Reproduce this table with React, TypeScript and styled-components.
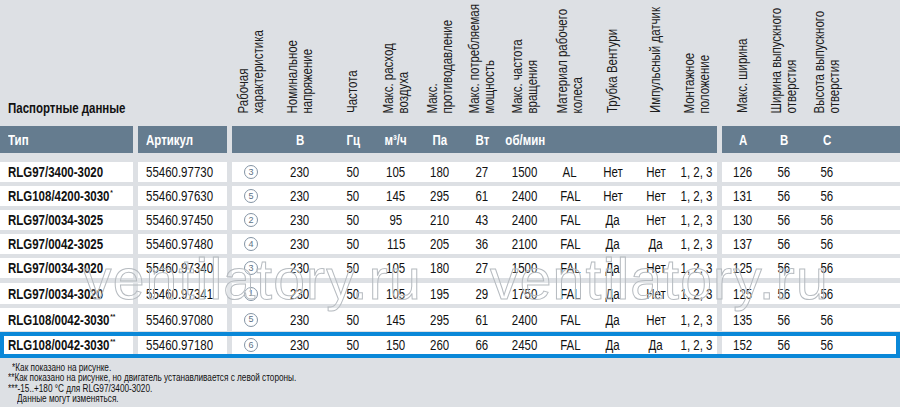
import React from 'react';
import styled, { createGlobalStyle } from 'styled-components';

const SANS = `"Liberation Sans", Arial, sans-serif`;
const K = 0.82;
const LABEL_H = 113;

const Global = createGlobalStyle`
  html, body { margin: 0; padding: 0; background: #dde0e4; }
  body { font-family: ${SANS}; color: #111; }
`;

const G3 = '38px 60px 46px 40px 48px 36px 50px 40px 46px 40px 41px';
const G4 = '42px 40px 46px 50px';

const Page = styled.div`
  position: relative;
  width: 900px;
  height: 407px;
  overflow: hidden;
  background: #dde0e4;
`;

const Band = styled.div<{ $h: number; $mt?: number; $selected?: boolean }>`
  position: relative;
  display: flex;
  gap: 5px;
  height: ${p => p.$h}px;
  margin-top: ${p => p.$mt ?? 0}px;
  padding: ${p => (p.$selected ? '4px 0' : '0')};
  box-sizing: border-box;
  ${p =>
    p.$selected &&
    `
    &::after {
      content: '';
      position: absolute;
      inset: 0;
      border: 4px solid #0a88d8;
      pointer-events: none;
    }
  `}
`;

const Group = styled.div<{ $w: number; $kind: 'none' | 'bar' | 'row'; $cols?: string; $pl?: number }>`
  box-sizing: border-box;
  flex: 0 0 ${p => p.$w}px;
  width: ${p => p.$w}px;
  background: ${p => (p.$kind === 'bar' ? '#657c8f' : p.$kind === 'row' ? '#ffffff' : 'transparent')};
  color: ${p => (p.$kind === 'bar' ? '#ffffff' : '#111111')};
  padding-left: ${p => p.$pl ?? 0}px;
  display: ${p => (p.$cols ? 'grid' : 'flex')};
  grid-template-columns: ${p => p.$cols ?? 'none'};
  align-items: ${p => (p.$kind === 'none' ? 'end' : 'center')};
  font-size: 14px;
  font-weight: ${p => (p.$kind === 'bar' ? 700 : 400)};
  white-space: nowrap;
`;

const Txt = styled.span<{ $left?: boolean; $bold?: boolean }>`
  display: inline-block;
  transform: scaleX(${K});
  transform-origin: ${p => (p.$left ? 'left center' : 'center center')};
  font-weight: ${p => (p.$bold ? 700 : 'inherit')};
  white-space: nowrap;
`;

const Title = styled.div`
  font-size: 14px;
  font-weight: 700;
  color: #111;
  padding: 0 0 10px 8px;
  line-height: 16px;
`;

const LabelCell = styled.div`
  align-self: start;
  height: ${LABEL_H}px;
  display: flex;
  justify-content: center;
  align-items: center;
`;

const Vert = styled.div`
  flex: 0 0 auto;
  width: ${LABEL_H / K}px;
  transform: rotate(-90deg) scaleX(${K});
  font-size: 14px;
  line-height: 15px;
  color: #1c1c1c;
  text-align: left;
  white-space: nowrap;
`;

const Cell = styled.div`
  display: flex;
  justify-content: center;
`;

const Sup = styled.sup`
  font-size: 8px;
  line-height: 0;
  vertical-align: 6px;
  margin-left: 1px;
`;

const Circ = styled.span`
  display: inline-flex;
  align-items: center;
  justify-content: center;
  width: 14px;
  height: 14px;
  border: 1px solid #8494a4;
  border-radius: 50%;
  box-sizing: border-box;
  font-size: 9px;
  color: #5d7185;
  line-height: 1;
`;

const Notes = styled.div`
  padding: 5px 0 0 8px;
  font-size: 10px;
  line-height: 10.4px;
  color: #111;
`;

const NoteLine = styled.div<{ $indent?: number }>`
  padding-left: ${p => p.$indent ?? 0}px;
  white-space: nowrap;
  transform: scaleX(${K});
  transform-origin: left center;
`;

const Watermark = styled.span<{ $left: number }>`
  position: absolute;
  left: ${p => p.$left}px;
  top: 251px;
  font-size: 57px;
  line-height: 57px;
  letter-spacing: 1.2px;
  color: rgba(255, 255, 255, 0.2);
  -webkit-text-stroke: 1px #b6bbc0;
  pointer-events: none;
  white-space: nowrap;
`;

const labels3: string[][] = [
  ['Рабочая', 'характеристика'],
  ['Номинальное', 'напряжение'],
  ['Частота'],
  ['Макс. расход', 'воздуха'],
  ['Макс.', 'противодавление'],
  ['Макс. потребляемая', 'мощность'],
  ['Макс. частота', 'вращения'],
  ['Материал рабочего', 'колеса'],
  ['Трубка Вентури'],
  ['Импульсный датчик'],
  ['Монтажное', 'положение'],
];

const labels4: string[][] = [
  ['Макс. ширина'],
  ['Ширина выпускного', 'отверстия'],
  ['Высота выпускного', 'отверстия'],
  [],
];

const units3 = ['', 'В', 'Гц', 'м³/ч', 'Па', 'Вт', 'об/мин', '', '', '', ''];
const units4 = ['A', 'B', 'C', ''];

type Row = {
  type: string;
  sup?: string;
  art: string;
  curve: number;
  vals: string[];
  dims: string[];
  h: number;
  mt: number;
  selected?: boolean;
};

const rows: Row[] = [
  { type: 'RLG97/3400-3020', art: '55460.97730', curve: 3, vals: ['230', '50', '105', '180', '27', '1500', 'AL', 'Нет', 'Нет', '1, 2, 3'], dims: ['126', '56', '56'], h: 20, mt: 9 },
  { type: 'RLG108/4200-3030', sup: '*', art: '55460.97630', curve: 5, vals: ['230', '50', '145', '295', '61', '2400', 'FAL', 'Нет', 'Нет', '1, 2, 3'], dims: ['131', '56', '56'], h: 20, mt: 4 },
  { type: 'RLG97/0034-3025', art: '55460.97450', curve: 2, vals: ['230', '50', '95', '210', '43', '2400', 'FAL', 'Да', 'Нет', '1, 2, 3'], dims: ['130', '56', '56'], h: 20, mt: 4 },
  { type: 'RLG97/0042-3025', art: '55460.97480', curve: 4, vals: ['230', '50', '115', '205', '36', '2100', 'FAL', 'Да', 'Да', '1, 2, 3'], dims: ['137', '56', '56'], h: 20, mt: 4 },
  { type: 'RLG97/0034-3020', art: '55460.97340', curve: 3, vals: ['230', '50', '105', '180', '27', '1500', 'FAL', 'Да', 'Нет', '1, 2, 3'], dims: ['125', '56', '56'], h: 20, mt: 4 },
  { type: 'RLG97/0034-3020', art: '55460.97341', curve: 1, vals: ['230', '50', '105', '195', '29', '1750', 'FAL', 'Да', 'Нет', '1, 2, 3'], dims: ['125', '56', '56'], h: 21, mt: 5 },
  { type: 'RLG108/0042-3030', sup: '**', art: '55460.97080', curve: 5, vals: ['230', '50', '145', '295', '61', '2400', 'FAL', 'Да', 'Нет', '1, 2, 3'], dims: ['135', '56', '56'], h: 23, mt: 4 },
  { type: 'RLG108/0042-3030', sup: '**', art: '55460.97180', curve: 6, vals: ['230', '50', '150', '260', '66', '2450', 'FAL', 'Да', 'Да', '1, 2, 3'], dims: ['152', '56', '56'], h: 26, mt: 1, selected: true },
];

function Label({ lines }: { lines: string[] }) {
  return (
    <LabelCell>
      {lines.length > 0 && (
        <Vert>
          {lines.map((t, j) => (
            <React.Fragment key={j}>
              {j > 0 && <br />}
              {t}
            </React.Fragment>
          ))}
        </Vert>
      )}
    </LabelCell>
  );
}

export default function App() {
  return (
    <Page>
      <Global />
      <Band $h={126}>
        <Group $w={133} $kind="none">
          <Title>
            <Txt $left>Паспортные данные</Txt>
          </Title>
        </Group>
        <Group $w={89} $kind="none" />
        <Group $w={485} $kind="none" $cols={G3}>
          {labels3.map((l, i) => (
            <Label key={i} lines={l} />
          ))}
        </Group>
        <Group $w={178} $kind="none" $cols={G4}>
          {labels4.map((l, i) => (
            <Label key={i} lines={l} />
          ))}
        </Group>
      </Band>

      <Band $h={27}>
        <Group $w={133} $kind="bar" $pl={8}>
          <Txt $left>Тип</Txt>
        </Group>
        <Group $w={89} $kind="bar" $pl={8}>
          <Txt $left>Артикул</Txt>
        </Group>
        <Group $w={485} $kind="bar" $cols={G3}>
          {units3.map((u, i) => (
            <Cell key={i}>
              <Txt>{u}</Txt>
            </Cell>
          ))}
        </Group>
        <Group $w={178} $kind="bar" $cols={G4}>
          {units4.map((u, i) => (
            <Cell key={i}>
              <Txt>{u}</Txt>
            </Cell>
          ))}
        </Group>
      </Band>

      {rows.map((r, i) => (
        <Band key={i} $h={r.h} $mt={r.mt} $selected={r.selected}>
          <Group $w={133} $kind="row" $pl={8}>
            <Txt $left $bold>
              {r.type}
              {r.sup && <Sup>{r.sup}</Sup>}
            </Txt>
          </Group>
          <Group $w={89} $kind="row" $pl={8}>
            <Txt $left>{r.art}</Txt>
          </Group>
          <Group $w={485} $kind="row" $cols={G3}>
            <Cell>
              <Circ>{r.curve}</Circ>
            </Cell>
            {r.vals.map((v, j) => (
              <Cell key={j}>
                <Txt>{v}</Txt>
              </Cell>
            ))}
          </Group>
          <Group $w={178} $kind="row" $cols={G4}>
            {r.dims.map((v, j) => (
              <Cell key={j}>
                <Txt>{v}</Txt>
              </Cell>
            ))}
            <Cell />
          </Group>
        </Band>
      ))}

      <Notes>
        <NoteLine $indent={5}>*Как показано на рисунке.</NoteLine>
        <NoteLine>**Как показано на рисунке, но двигатель устанавливается с левой стороны.</NoteLine>
        <NoteLine>***-15..+180 °C для RLG97/3400-3020.</NoteLine>
        <NoteLine $indent={11}>Данные могут изменяться.</NoteLine>
      </Notes>

      <Watermark $left={83}>ventilatory.ru</Watermark>
      <Watermark $left={490}>ventilatory.ru</Watermark>
    </Page>
  );
}
